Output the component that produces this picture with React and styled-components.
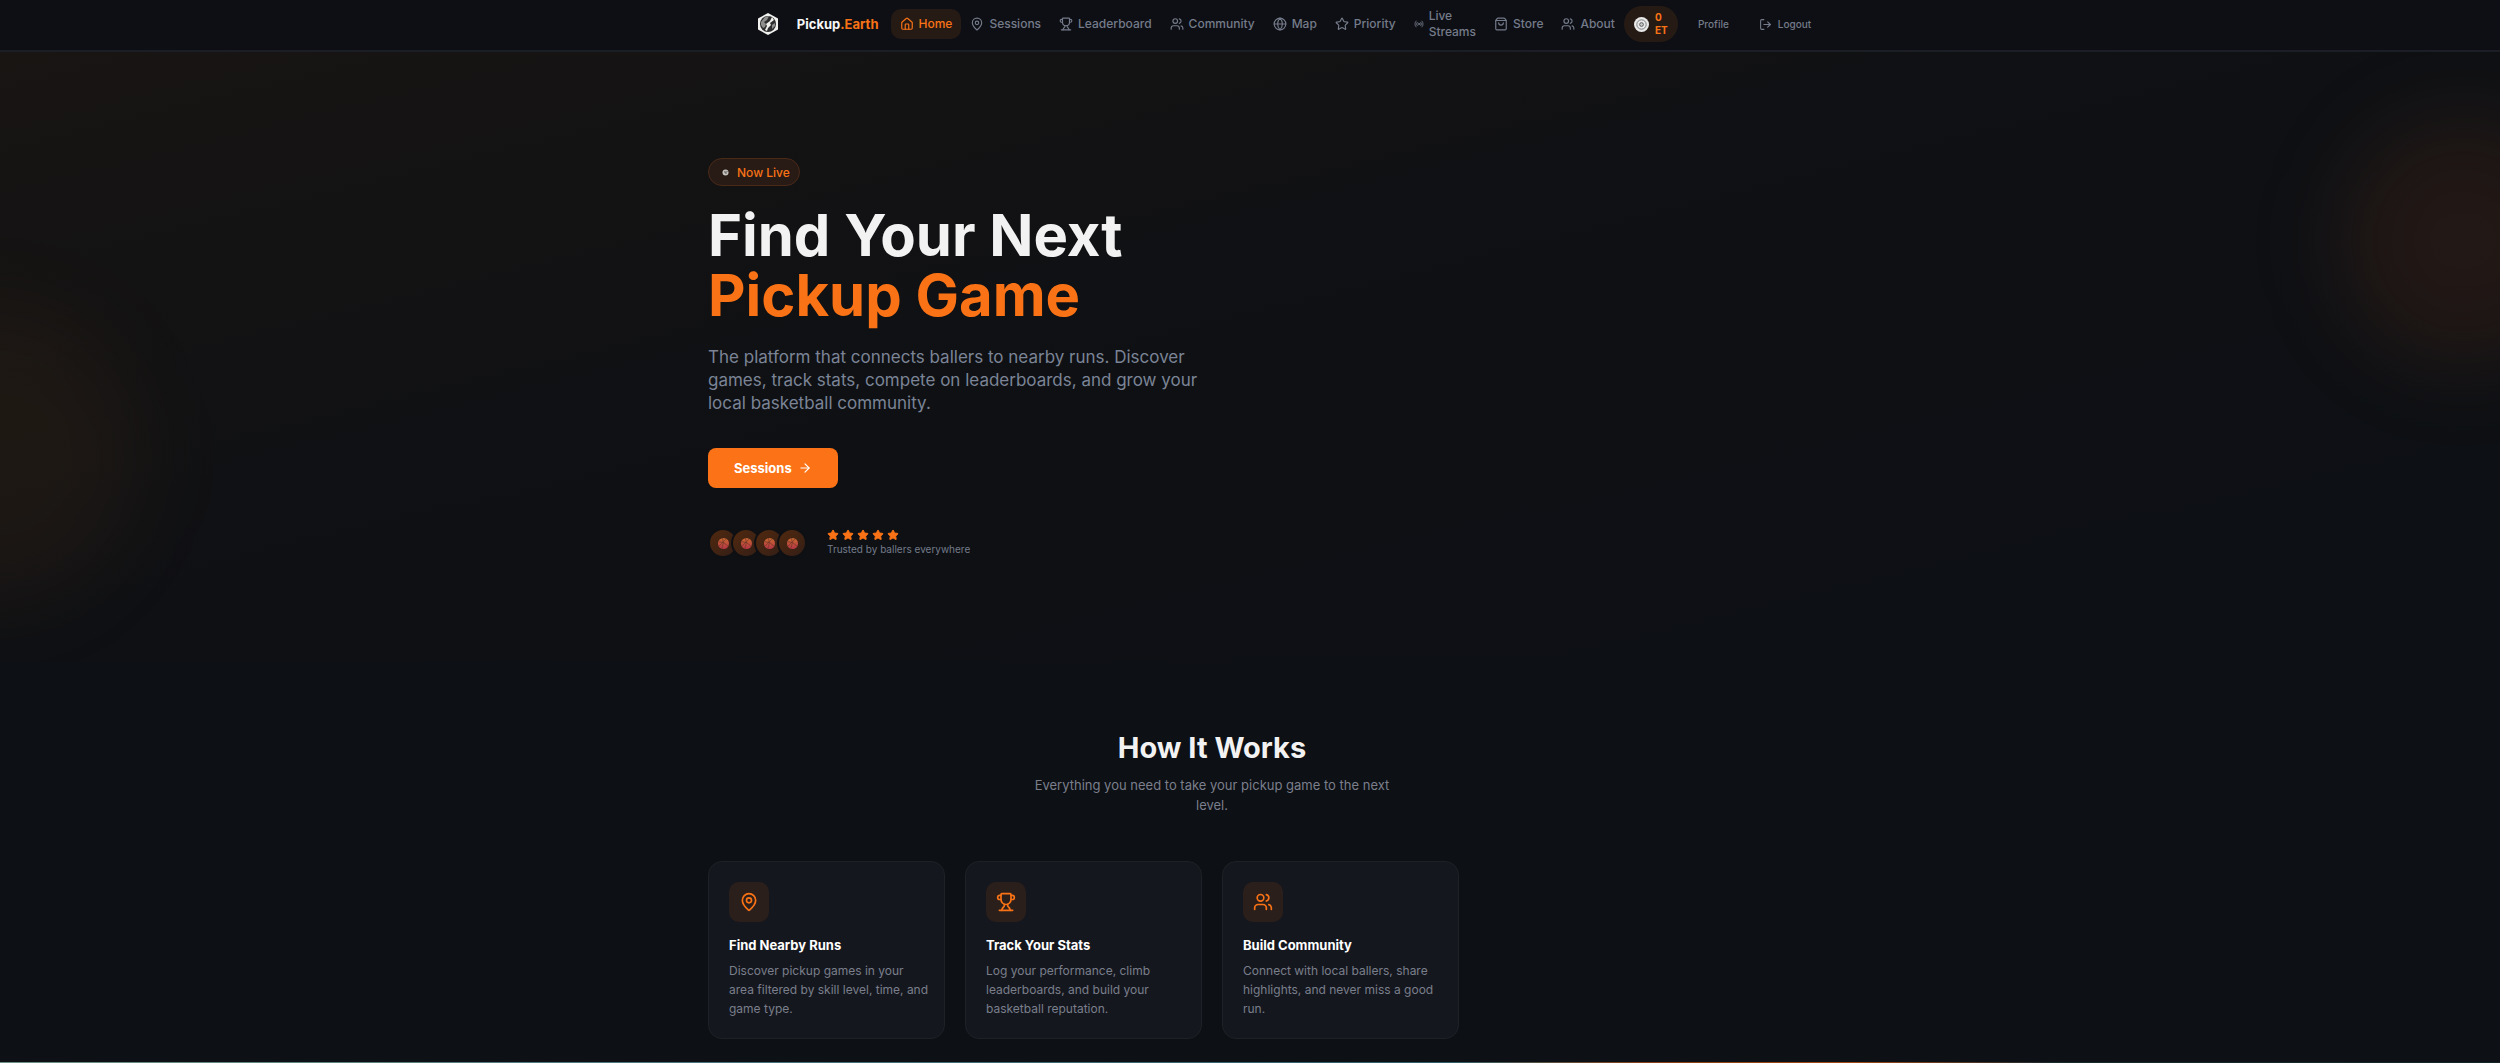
import styled, { createGlobalStyle } from 'styled-components'
import {
  House, MapPin, Trophy, Users, Globe, Star, Radio, ShoppingBag, LogOut, ArrowRight,
} from 'lucide-react'

const GlobalStyle = createGlobalStyle`
  * { box-sizing: border-box; }
  body {
    margin: 0;
    background: #0d1014;
    color: #f2f2f2;
    font-family: Inter, "Liberation Sans", sans-serif;
    overflow-x: hidden;
  }
  h1, h2, h3, p { margin: 0; }
  a { text-decoration: none; }
`

const Header = styled.header`
  display: flex;
  justify-content: center;
  height: 52px;
  padding-left: 68px;
  background: #0e0f14;
  border-bottom: 2px solid #1b1e24;
`
const Bar = styled.div`
  display: flex;
  align-items: center;
  height: 48px;
`
const Brand = styled.a`
  display: flex;
  align-items: center;
  gap: 18px;
  margin-right: 12px;
  color: #f7f7f7;
  font-size: 13px;
  font-weight: 700;
`
const Accent = styled.span`
  color: #f97316;
`
const Nav = styled.nav`
  display: flex;
  align-items: center;
`
const NavLink = styled.a`
  display: flex;
  align-items: center;
  gap: 5px;
  min-height: 30px;
  padding: 0 9px;
  border-radius: 10px;
  font-size: 12px;
  font-weight: 500;
  line-height: 16px;
  color: ${({ $active }) => ($active ? '#f97316' : '#747b8a')};
  background: ${({ $active }) => ($active ? '#261a15' : 'transparent')};
`
const Tokens = styled.button`
  display: flex;
  align-items: center;
  gap: 6px;
  width: 54px;
  height: 36px;
  padding: 0 10px;
  border: none;
  border-radius: 18px;
  background: #261a15;
  color: #f97316;
  font: 700 10px/13px Inter, sans-serif;
  text-align: left;
`
const Account = styled.a`
  display: flex;
  align-items: center;
  gap: 6px;
  margin-left: ${({ $gap }) => $gap}px;
  color: #747b8a;
  font-size: 10px;
  font-weight: 500;
`

const Hero = styled.section`
  position: relative;
  overflow: hidden;
  padding: 106px 0 104px;
  background: linear-gradient(to bottom right, #181513 0%, #0e1014 50%, #0d1014 100%);
`
const Glow = styled.div`
  position: absolute;
  width: ${({ $size }) => $size}px;
  height: ${({ $size }) => $size}px;
  border-radius: 50%;
  filter: blur(46px);
`
const RightGlow = styled(Glow)`
  top: 64px;
  right: -88px;
  background: rgba(249, 115, 30, 0.09);
`
const LeftGlow = styled(Glow)`
  bottom: 54px;
  left: -160px;
  background: rgba(249, 135, 22, 0.05);
`
const Container = styled.div`
  position: relative;
  width: 100%;
  max-width: 1084px;
  margin: 0 auto;
`
const Badge = styled.div`
  display: inline-flex;
  align-items: center;
  gap: 8px;
  height: 28px;
  padding: 0 9px 0 13px;
  border: 1px solid #4a2918;
  border-radius: 14px;
  background: #281b15;
  color: #f97316;
  font-size: 12px;
  font-weight: 500;
`
const Title = styled.h1`
  margin-top: 19px;
  font-size: 58px;
  font-weight: 700;
  line-height: 60px;
`
const Lead = styled.p`
  max-width: 500px;
  margin-top: 21px;
  color: #7b8496;
  font-size: 17px;
  line-height: 23px;
`
const Cta = styled.button`
  display: flex;
  align-items: center;
  gap: 6px;
  height: 40px;
  margin-top: 33px;
  padding: 0 26px;
  border: none;
  border-radius: 8px;
  background: #fb7316;
  color: #fff;
  font: 700 13px Inter, sans-serif;
`
const Social = styled.div`
  display: flex;
  align-items: center;
  gap: 20px;
  margin-top: 40px;
`
const Avatars = styled.div`
  display: flex;
`
const Avatar = styled.div`
  display: flex;
  align-items: center;
  justify-content: center;
  width: 30px;
  height: 30px;
  border: 2px solid #0e1014;
  border-radius: 50%;
  background: linear-gradient(135deg, #51290f, #331e16);

  & + & {
    margin-left: -7px;
  }
`
const Stars = styled.div`
  display: flex;
  gap: 3px;
  height: 13px;
`
const Trusted = styled.p`
  color: #747b8a;
  font-size: 10px;
  line-height: 15px;
`

const How = styled.section`
  padding: 68px 0 23px;
`
const Inner = styled.div`
  max-width: 1008px;
`
const Heading = styled.h2`
  font-size: 29px;
  font-weight: 700;
  line-height: 36px;
  text-align: center;
`
const Sub = styled.p`
  max-width: 370px;
  margin: 9px auto 0;
  color: #7b7f8c;
  font-size: 13px;
  line-height: 20px;
  text-align: center;
`
const Cards = styled.div`
  display: grid;
  grid-template-columns: repeat(4, 1fr);
  gap: 20px;
  margin-top: 46px;
`
const Card = styled.article`
  padding: 20px 14px 20px 20px;
  border: 1px solid #1e2126;
  border-radius: 14px;
  background: #15171e;
`
const IconBox = styled.div`
  display: flex;
  align-items: center;
  justify-content: center;
  width: 40px;
  height: 40px;
  border-radius: 10px;
  background: #2b1f1b;
  color: #f97316;
`
const CardTitle = styled.h3`
  margin-top: 14px;
  color: #fff;
  font-size: 13px;
  font-weight: 700;
  line-height: 18px;
`
const CardText = styled.p`
  margin-top: 7px;
  color: #7a7f8c;
  font-size: 12px;
  line-height: 19px;
`
const Strip = styled.div`
  height: 4px;
  background: linear-gradient(90deg, #6f9184 0%, #47737c 30%, #2d5f68 58%, #8a4016 66%, #a34a14 74%, #1c2a2e 82%, #16242a 100%);
`

const links = [
  { label: 'Home', Icon: House, active: true },
  { label: 'Sessions', Icon: MapPin },
  { label: 'Leaderboard', Icon: Trophy },
  { label: 'Community', Icon: Users },
  { label: 'Map', Icon: Globe },
  { label: 'Priority', Icon: Star },
  { label: <>Live<br />Streams</>, Icon: Radio, size: 10 },
  { label: 'Store', Icon: ShoppingBag },
  { label: 'About', Icon: Users },
]

const cards = [
  { title: 'Find Nearby Runs', Icon: MapPin, text: 'Discover pickup games in your area filtered by skill level, time, and game type.' },
  { title: 'Track Your Stats', Icon: Trophy, text: 'Log your performance, climb leaderboards, and build your basketball reputation.' },
  { title: 'Build Community', Icon: Users, text: 'Connect with local ballers, share highlights, and never miss a good run.' },
]

const Logo = () => (
  <svg width="22" height="24" viewBox="0 0 22 24">
    <path d="M11 1 L21 6.500 V17.500 L11 23 L1 17.500 V6.500 Z" fill="#f1f1ef" />
    <circle cx="11" cy="12" r="8" fill="#2c2d2e" />
    <path d="M4 10 L8 5 L12 4 L10 8 L7 10 L9 12 L8 15 L6 16 L4 13 Z" fill="#8e8e8c" />
    <path d="M15 5 L17 8 L13 11 L14 13 L11 16 L10 19 L8 18 L10 14 L9 12 L13 9 Z" fill="#efefec" />
    <path d="M15 13 L18 11 L18 14 L15 17 Z" fill="#8e8e8c" />
  </svg>
)

const Coin = () => (
  <svg width="15" height="15" viewBox="0 0 16 16">
    <circle cx="8" cy="8" r="8" fill="#e9e9e9" />
    <circle cx="8" cy="8" r="5" fill="none" stroke="#77797b" />
    <circle cx="8" cy="8" r="2" fill="#c9c9c9" stroke="#55585b" />
  </svg>
)

const Dot = () => (
  <svg width="7" height="7" viewBox="0 0 7 7">
    <circle cx="3.500" cy="3.500" r="3" fill="#c4c2be" />
    <path d="M2 3 H4 V5 M5 2 V3" stroke="#5b5550" fill="none" />
  </svg>
)

const Ball = () => (
  <svg width="11" height="11" viewBox="0 0 12 12">
    <defs>
      <linearGradient id="ball" x1="0" y1="0" x2="0" y2="1">
        <stop offset="0" stopColor="#c96a30" />
        <stop offset="1" stopColor="#b53446" />
      </linearGradient>
    </defs>
    <circle cx="6" cy="6" r="6" fill="url(#ball)" />
    <path d="M1 4 Q7 4 11 9 M5 0 Q7 6 4 12 M9 1 Q5 5 1 9" stroke="#6b3326" strokeWidth="0.700" fill="none" />
  </svg>
)

const App = () => {
  return (
    <>
      <GlobalStyle />
      <Header>
        <Bar>
          <Brand href="#">
            <Logo />
            <span>Pickup<Accent>.Earth</Accent></span>
          </Brand>
          <Nav>
            {links.map(({ label, Icon, active, size = 14 }, i) => (
              <NavLink key={i} href="#" $active={active}>
                <Icon size={size} />
                <span>{label}</span>
              </NavLink>
            ))}
          </Nav>
          <Tokens>
            <Coin />
            <span>0<br />ET</span>
          </Tokens>
          <Account href="#" $gap={20}>Profile</Account>
          <Account href="#" $gap={30}>
            <LogOut size={13} />
            Logout
          </Account>
        </Bar>
      </Header>
      <Hero>
        <RightGlow $size={250} />
        <LeftGlow $size={300} />
        <Container>
          <Badge><Dot />Now Live</Badge>
          <Title>Find Your Next<br /><Accent>Pickup Game</Accent></Title>
          <Lead>
            The platform that connects ballers to nearby runs. Discover games, track
            stats, compete on leaderboards, and grow your local basketball community.
          </Lead>
          <Cta>Sessions <ArrowRight size={14} /></Cta>
          <Social>
            <Avatars>
              {[0, 1, 2, 3].map((n) => <Avatar key={n}><Ball /></Avatar>)}
            </Avatars>
            <div>
              <Stars>
                {[0, 1, 2, 3, 4].map((n) => (
                  <Star key={n} size={12} color="#f97316" fill="#f97316" />
                ))}
              </Stars>
              <Trusted>Trusted by ballers everywhere</Trusted>
            </div>
          </Social>
        </Container>
      </Hero>
      <How>
        <Container>
          <Inner>
            <Heading>How It Works</Heading>
            <Sub>Everything you need to take your pickup game to the next level.</Sub>
            <Cards>
              {cards.map(({ title, Icon, text }) => (
                <Card key={title}>
                  <IconBox><Icon size={20} /></IconBox>
                  <CardTitle>{title}</CardTitle>
                  <CardText>{text}</CardText>
                </Card>
              ))}
            </Cards>
          </Inner>
        </Container>
      </How>
      <Strip />
    </>
  )
}

export default App
